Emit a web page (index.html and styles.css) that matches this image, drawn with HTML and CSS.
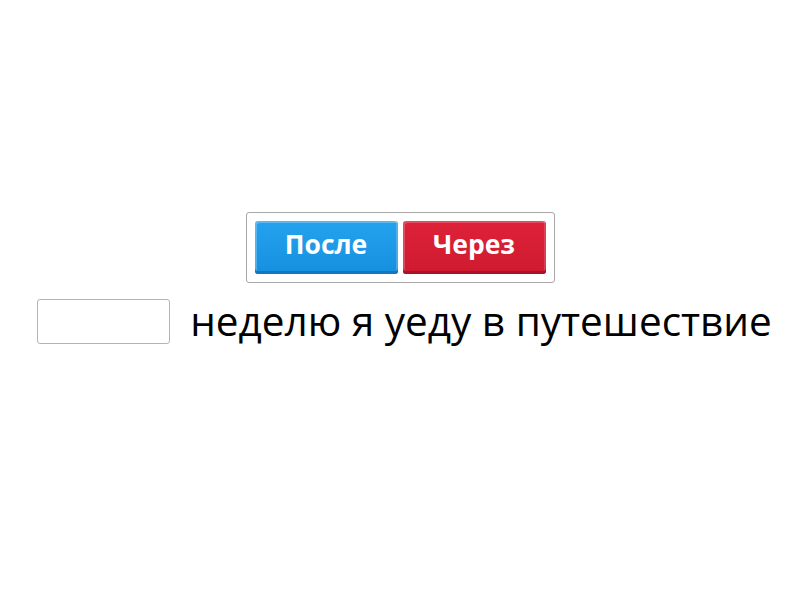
FILE: index.html
```html
<!DOCTYPE html>
<html lang="ru">
<head>
<meta charset="utf-8">
<link rel="stylesheet" href="styles.css">
</head>
<body>
<div class="page">
  <div class="choices">
    <button class="btn btn-blue">После</button>
    <button class="btn btn-red">Через</button>
  </div>
  <div class="sentence">
    <span class="blank"></span>
    <span class="text">неделю я уеду в путешествие</span>
  </div>
</div>
</body>
</html>
```
FILE: styles.css
```css
html, body {
  margin: 0;
  padding: 0;
  background: #fff;
  font-family: "Open Sans", "DejaVu Sans", sans-serif;
}
.page {
  width: 800px;
  height: 600px;
  display: flex;
  flex-direction: column;
  align-items: center;
  padding-top: 212px;
  box-sizing: border-box;
}
.choices {
  display: flex;
  gap: 5px;
  padding: 8px;
  border: 1px solid #a8a8a8;
  border-radius: 3px;
}
.btn {
  width: 143px;
  height: 53px;
  border: none;
  border-radius: 3px;
  color: #fff;
  font-family: "Open Sans", "DejaVu Sans", sans-serif;
  font-weight: 700;
  font-size: 26.5px;
  padding: 0 0 6px 0;
  line-height: 1;
}
.btn-blue {
  background: linear-gradient(#25a2ee, #1590e0);
  box-shadow: inset 0 -3px 0 #1277c2, inset 2px 2px 0 rgba(255,255,255,0.25), inset -2px 0 0 rgba(255,255,255,0.2);
}
.btn-red {
  background: linear-gradient(#dd2238, #ce1a30);
  box-shadow: inset 0 -3px 0 #a8132a, inset 2px 2px 0 rgba(255,255,255,0.2), inset -2px 0 0 rgba(255,255,255,0.15);
}
.sentence {
  display: flex;
  align-items: center;
  gap: 20px;
  margin-top: 16px;
  padding-left: 9px;
}
.blank {
  width: 131px;
  height: 43px;
  border: 1px solid #b4b4b4;
  border-radius: 3px;
}
.text {
  font-size: 40.5px;
  color: #000;
  line-height: 1;
}
```
